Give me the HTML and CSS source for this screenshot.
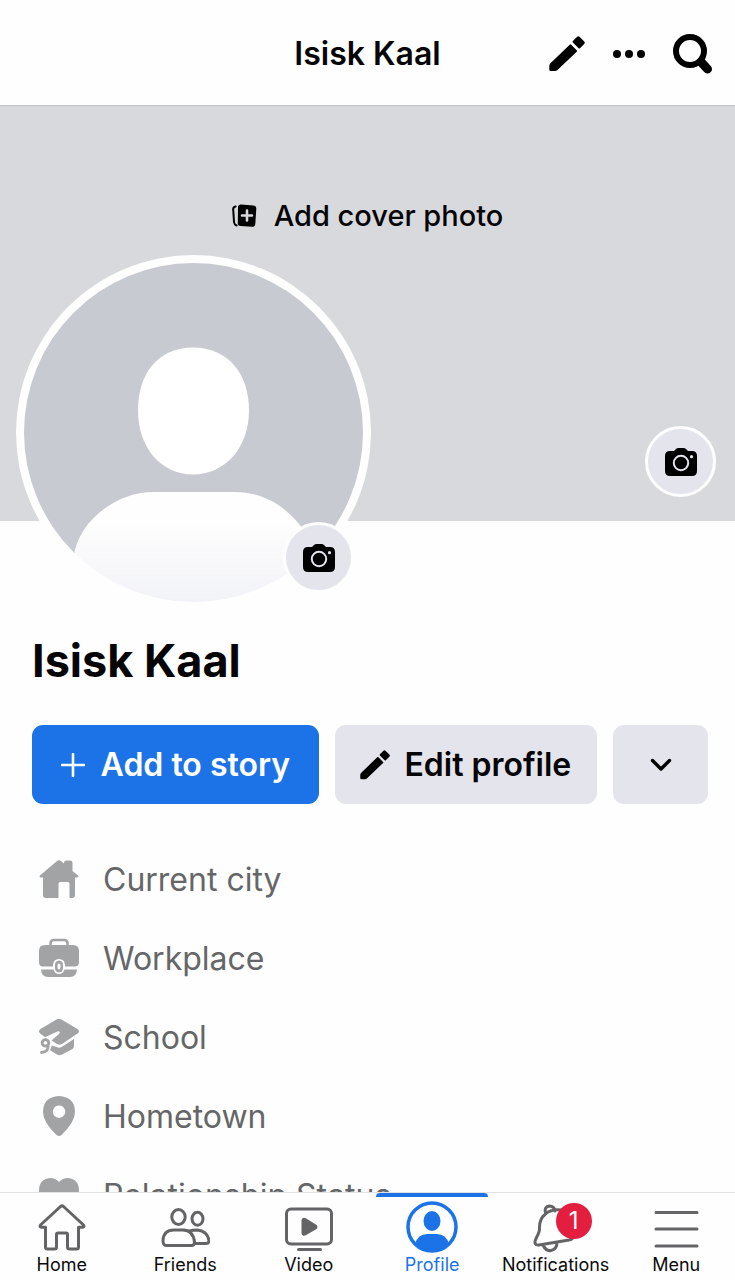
FILE: index.html
```html
<!DOCTYPE html>
<html lang="en">
<head>
<meta charset="utf-8">
<meta name="viewport" content="width=device-width, initial-scale=1">
<title>Isisk Kaal</title>
<link rel="stylesheet" href="styles.css">
</head>
<body>
<svg class="sprite" aria-hidden="true">
  <symbol id="camera" viewBox="0 0 32 28">
    <path fill="#000" d="M5 3h4l2-2q1-1 2.500-1h5q1.500 0 2.500 1l2 2h4q5 0 5 5v15q0 5-5 5H5q-5 0-5-5V8q0-5 5-5z"/>
    <circle cx="16" cy="15" r="7.200" fill="none" stroke="#e4e5ec" stroke-width="2"/>
    <circle cx="26.500" cy="8.700" r="1.600" fill="#e4e5ec"/>
  </symbol>
  <symbol id="pencil" viewBox="0 0 36 36">
    <path d="M1.200 27.500 20.700 8.700q.8-.7 1.500 0l5.500 5.600q.7.700 0 1.400L8.200 34.200q-.9.800-2 .8H1.800Q.3 35 .3 33.500V30q0-1.500.9-2.500zM23.900 5l4.200-4.200q1.300-1.200 2.500 0l4.600 4.700q1.200 1.300 0 2.500L31 12.200q-.7.600-1.400 0l-5.700-5.700q-.7-.8 0-1.500z"/>
  </symbol>
</svg>
<div class="app">
  <header class="topbar">
    <div class="topbar-title">Isisk Kaal</div>
    <div class="topbar-actions">
      <button class="icon-button" aria-label="Edit"><svg width="36" height="36"><use href="#pencil"/></svg></button>
      <button class="icon-button" aria-label="More"><svg width="34" height="10" viewBox="0 0 34 10"><circle cx="5" cy="5" r="4"/><circle cx="17" cy="5" r="4"/><circle cx="29" cy="5" r="4"/></svg></button>
      <button class="icon-button" aria-label="Search"><svg width="40" height="40" viewBox="0 0 40 40" fill="none" stroke="#000"><circle cx="17" cy="17" r="14" stroke-width="6"/><path d="M28 28 34.500 35" stroke-width="9" stroke-linecap="round"/></svg></button>
    </div>
  </header>

  <main class="content">
    <section class="cover">
      <button class="cover-add">
        <svg width="26" height="24" viewBox="0 0 26 24"><path d="M9 .5 21.500 1.500q3 .3 2.800 3.200L23.300 20q-.3 3-3.300 2.800L8.500 22q-2.800-.2-2.700-3L6 3.300Q6.200.400 9 .500z"/><path d="M15 6.500v10M10 11.500h10" stroke="#d8d9dd" stroke-width="2.600" stroke-linecap="round"/><path d="M3.600 2.500Q1 3 1.200 5.500L2 18q.3 2.700 2.600 3.500" fill="none" stroke="#000" stroke-width="2" stroke-linecap="round"/></svg>
        Add cover photo
      </button>
      <button class="camera-button cover-camera" aria-label="Change cover photo"><svg width="32" height="28"><use href="#camera"/></svg></button>
    </section>

    <div class="avatar">
      <svg class="avatar-image" viewBox="0 0 339 339" role="img" aria-label="Profile picture">
        <defs>
          <linearGradient id="body" x1="0" y1="0" x2="0" y2="1"><stop offset=".25" stop-color="#fefefe"/><stop offset="1" stop-color="#f2f3f7"/></linearGradient>
          <clipPath id="round"><circle cx="169.500" cy="169.500" r="169.500"/></clipPath>
        </defs>
        <g clip-path="url(#round)">
          <path fill="#c8cad1" d="M0 0h339v290H0z"/>
          <path fill="#fefefe" d="M0 290h339v49H0z"/>
          <path fill="#fff" d="M169 84.500c35 0 56 26 56 63s-24 64-56 64-55-27-55-64 20-63 55-63z"/>
          <path fill="url(#body)" d="M50 292c4-30 38-63 80-63h81c42 0 72 33 80 63v47H50z"/>
        </g>
      </svg>
      <button class="camera-button avatar-camera" aria-label="Change profile picture"><svg width="32" height="28"><use href="#camera"/></svg></button>
    </div>

    <h1 class="name">Isisk Kaal</h1>

    <div class="actions">
      <button class="action action-primary">
        <svg width="24" height="24" viewBox="0 0 24 24"><path d="M12 1v22M1 12h22" stroke="#fff" stroke-width="2.600" stroke-linecap="round"/></svg>
        Add to story
      </button>
      <button class="action action-edit"><svg width="30" height="30"><use href="#pencil"/></svg>Edit profile</button>
      <button class="action action-more" aria-label="More options">
        <svg width="22" height="14" viewBox="0 0 22 14"><path d="M2.500 2.500 11 11l8.500-8.500" fill="none" stroke="#000" stroke-width="3.400" stroke-linecap="round" stroke-linejoin="round"/></svg>
      </button>
    </div>

    <ul class="details">
      <li class="detail">
        <svg class="detail-icon" viewBox="0 0 40 40"><path d="M18 1q2-1.500 4 0l3 2.600V3q0-2.500 2.500-2.500h3.500Q33.500.5 33.500 3v8l5.300 4.200q1.600 1.800-.8 2.300h-2V35q0 3-3 3h-2.500V24q0-2-2-2h-7q-2 0-2 2v14H7q-3 0-3-3V17.500H2q-2.400-.5-.8-2.300z"/></svg>
        Current city
      </li>
      <li class="detail">
        <svg class="detail-icon" viewBox="0 0 40 40"><path d="M11.500 7V4.500q0-3.500 3.500-3.500h10q3.500 0 3.500 3.500V7" fill="none" stroke="#a2a3a5" stroke-width="2.500"/><path d="M6 6h28q6 0 6 6v11q0 4.500-4 4.500H26V26q-.5-6-6-6t-6 6v1.500H4Q0 27.500 0 23V12q0-6 6-6z"/><path d="M2 30.500h12.500q1.500 4.500 5.500 4.500t5.500-4.500H38q-.5 7.500-7 7.500H9q-6.500 0-7-7.500z"/><path fill-rule="evenodd" d="M20 21.500q4 .3 4 4.500v3q0 4.200-4 4.500-4-.3-4-4.500v-3q0-4.200 4-4.500zm0 3q-1.500 0-1.500 2v2q0 2 1.500 2t1.500-2v-2q0-2-1.500-2z"/></svg>
        Workplace
      </li>
      <li class="detail">
        <svg class="detail-icon" viewBox="0 0 40 40"><path d="M17.500 1.500q2.500-1.500 5 0l16 9.500q3 2.300 0 4.600L23 26q-2.500 1.500-5 0l-5.500-3.500 7.500-6.500q1.300-1.200.6-2.200-.8-1-2.300-.3L6.500 19q-1-.2-2-1L1.400 15.800q-2.800-2.400 0-4.800z"/><path d="M35 21v7q0 2-1.500 3L23 36.500q-2.500 1.500-5 0l-7-4.200 1.800-4.800 4.700 1.500q2.500 1.300 5 0z"/><path d="M6.500 21.500a3.300 3.300 0 1 1-.1 0M9 27q1 7-6.500 7.500" fill="none" stroke="#a2a3a5" stroke-width="3" stroke-linecap="round"/></svg>
        School
      </li>
      <li class="detail">
        <svg class="detail-icon" viewBox="0 0 40 40"><path fill-rule="evenodd" d="M20-1q16 1 16 16 0 10-13.500 23-2.500 2-5 0Q4 25 4 15 4 0 20-1zm0 9.500a6.200 6.200 0 1 0 .1 0z"/></svg>
        Hometown
      </li>
      <li class="detail">
        <svg class="detail-icon" viewBox="0 0 40 40"><path d="M20 6Q23.500 2 29 2q11 1 11 13 0 12-20 23Q0 27 0 15 0 3 11 2q5.500 0 9 4z"/></svg>
        Relationship Status
      </li>
    </ul>
  </main>

  <nav class="tabs">
    <a class="tab" href="#"><svg width="50" height="50" viewBox="0 0 50 50"><path d="M23.500 3.500q1.500-1.300 3 0l20 18.500q1.300 2-1 2.300h-4V44q0 2-2 2h-7q-2 0-2-2V31.500q0-1.500-1.500-1.500h-8q-1.500 0-1.500 1.500V44q0 2-2 2h-7q-2 0-2-2V24.300h-4q-2.300-.3-1-2.300z"/></svg>Home</a>
    <a class="tab" href="#"><svg width="50" height="50" viewBox="0 0 50 50"><ellipse cx="18.500" cy="14" rx="6.700" ry="7.500"/><ellipse cx="37.500" cy="15.800" rx="5.500" ry="6.500"/><path d="M3 37.500Q3.500 27 14 27h9q10 0 11.500 12 0 3.500-3 3.500H6q-3 0-3-5z"/><path d="M29.500 28q3-1 8-1 10 1 11.500 10.500 0 3-3 3H34.500"/></svg>Friends</a>
    <a class="tab" href="#"><svg width="50" height="50" viewBox="0 0 50 50"><rect x="2.500" y="6" width="45" height="35" rx="4.500"/><path d="M14.500 46.500h22"/><path class="filled" d="M19 17.500q.2-2 2-1L31.500 23q1 1 0 2L21 31q-1.800.9-2-1z"/></svg>Video</a>
    <a class="tab tab-active" href="#" aria-current="page"><svg width="52" height="52" viewBox="0 0 52 52"><circle cx="26" cy="26" r="24" fill="none" stroke="#1c73e8" stroke-width="3.500"/><ellipse cx="26" cy="20" rx="8.500" ry="10"/><path d="M9 43q3-10 12-10h10q9 0 12 10-7 8-17 8T9 43z"/></svg>Profile</a>
    <a class="tab" href="#"><span class="tab-icon"><svg width="50" height="50" viewBox="0 0 50 50"><path d="M14.500 10Q13 3.500 18.500 3q4.500 0 5.500 5M12 42q3 6.500 8 5.500 6-1.500 6-8M30 7Q20 6 14.500 11 8 16 8.500 26q0 3-3 8.500-4 8 2.500 7.500L38 37q5-1 4-5"/></svg><span class="badge">1</span></span>Notifications</a>
    <a class="tab" href="#"><svg width="50" height="50" viewBox="0 0 50 50"><path d="M5 9.500h41M5 26h41M5 43h41"/></svg>Menu</a>
  </nav>
</div>
</body>
</html>
```
FILE: styles.css
```css
* {
  box-sizing: border-box;
}

body {
  margin: 0;
  background: #fefefe;
  color: #050506;
  font-family: Inter, "Liberation Sans", sans-serif;
}

button {
  padding: 0;
  border: 0;
  background: none;
  color: inherit;
  font: inherit;
  cursor: pointer;
}

svg {
  display: block;
  flex: none;
}

.sprite {
  position: absolute;
  width: 0;
  height: 0;
}

.app {
  display: flex;
  flex-direction: column;
  height: 100vh;
}

.topbar {
  display: grid;
  grid-template-columns: 1fr auto 1fr;
  align-items: center;
  padding: 34px 22px 31px;
  border-bottom: 1px solid #c0c1c6;
}

.topbar-title {
  grid-column: 2;
  font-size: 32px;
  font-weight: 600;
  line-height: 40px;
}

.topbar-actions {
  display: flex;
  align-items: center;
  justify-content: flex-end;
  gap: 27px;
}

.content {
  flex: 1;
  min-height: 0;
  overflow: hidden;
}

.cover {
  position: relative;
  display: flex;
  align-items: flex-start;
  justify-content: center;
  height: 415px;
  padding-top: 92px;
  background: #d8d9dd;
}

.cover-add {
  display: flex;
  align-items: center;
  gap: 16px;
  font-size: 29px;
  font-weight: 500;
  line-height: 36px;
}

.camera-button {
  position: absolute;
  display: grid;
  place-items: center;
  width: 71px;
  height: 71px;
  border: 3px solid #fefefe;
  border-radius: 50%;
  background: #e4e5ec;
}

.cover-camera {
  right: 19px;
  bottom: 24px;
}

.avatar {
  position: relative;
  width: 355px;
  margin: -266px 0 0 16px;
  padding: 8px;
  border-radius: 50%;
  background: #fefefe;
}

.avatar-camera {
  right: 17px;
  bottom: 17px;
}

.name {
  margin: 23px 32px 36px;
  font-size: 45px;
  font-weight: 700;
  line-height: 56px;
}

.actions {
  display: flex;
  gap: 16px;
  padding: 0 27px 0 32px;
}

.action {
  display: flex;
  align-items: center;
  justify-content: center;
  gap: 14px;
  height: 79px;
  border-radius: 11px;
  background: #e4e5ec;
  font-size: 32px;
  font-weight: 600;
  white-space: nowrap;
}

.action-primary {
  flex: 287;
  gap: 16px;
  background: #1c73e8;
  color: #fff;
}

.action-edit {
  flex: 263;
}

.action-more {
  flex: 95;
}

.details {
  margin: 36px 0 0;
  padding: 0 39px;
  list-style: none;
}

.detail {
  display: flex;
  align-items: center;
  gap: 24px;
  height: 79px;
  color: #656668;
  font-size: 32px;
  white-space: nowrap;
}

.detail-icon {
  width: 40px;
  height: 40px;
  overflow: visible;
  fill: #a2a3a5;
}

.tabs {
  display: grid;
  grid-template-columns: repeat(5, 21fr) 20fr;
  height: 88px;
  border-top: 1px solid #dfe1e3;
  background: #fefefe;
}

.tab {
  display: flex;
  flex-direction: column;
  align-items: center;
  justify-content: flex-end;
  padding-bottom: 3px;
  color: #0b0b0c;
  font-size: 18px;
  line-height: 24px;
  text-decoration: none;
}

.tab svg {
  fill: none;
  stroke: #646466;
  stroke-width: 3;
  stroke-linecap: round;
  stroke-linejoin: round;
}

.tab .filled {
  fill: #646466;
}

.tab-active {
  margin: 0 6px;
  border-top: 4px solid #1c73e8;
  border-radius: 4px 4px 0 0;
  color: #1c73e8;
}

.tab-active svg {
  fill: #1c73e8;
  stroke: none;
}

.tab-icon {
  position: relative;
}

.badge {
  position: absolute;
  top: 0;
  left: 25px;
  width: 36px;
  height: 36px;
  border-radius: 50%;
  background: #e41e3f;
  color: #fff;
  font-size: 24px;
  line-height: 36px;
  text-align: center;
}
```
